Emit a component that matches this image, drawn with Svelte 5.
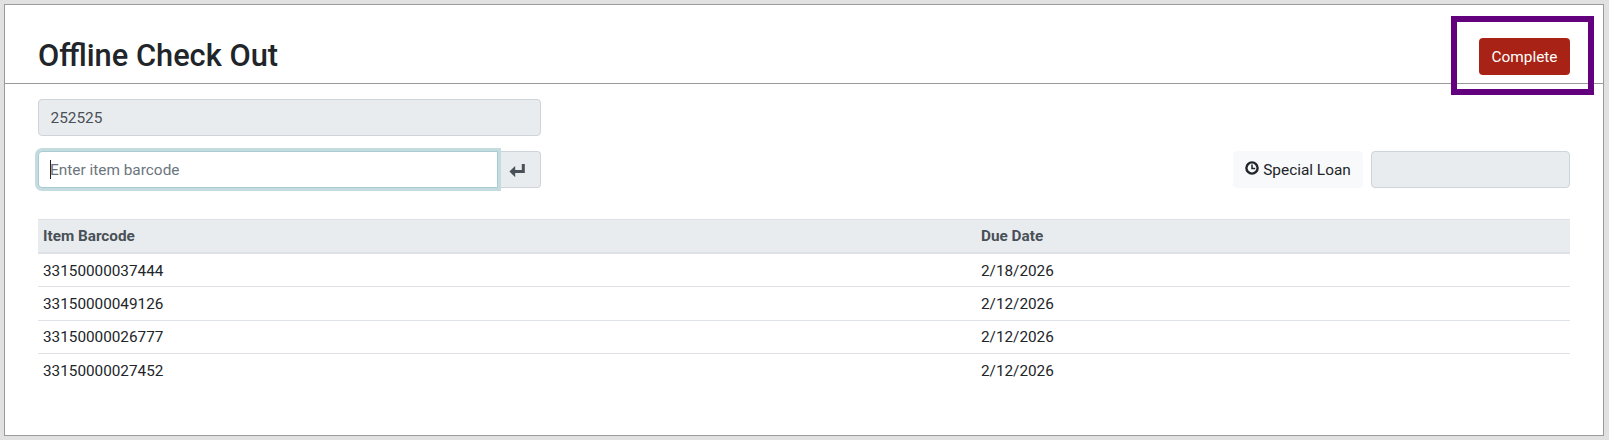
<script>
  const rows = [
    ['33150000037444', '2/18/2026'],
    ['33150000049126', '2/12/2026'],
    ['33150000026777', '2/12/2026'],
    ['33150000027452', '2/12/2026']
  ];
</script>

<div class="page">
  <main class="card">
    <header class="head">
      <h1>Offline Check Out</h1>
      <button class="complete">Complete</button>
      <div class="highlight"></div>
    </header>

    <section class="body">
      <div class="field patron">252525</div>

      <div class="controls">
        <div class="barcode">
          <div class="input"><span class="caret"></span><span class="placeholder">Enter item barcode</span></div>
          <button class="enter" aria-label="Enter">
            <svg viewBox="0 0 16 14" width="16" height="14"><path d="M14.3 1V8.6H4.6" fill="none" stroke="currentColor" stroke-width="3"/><path d="M0.4 8.6 6.2 3V14.2Z" fill="currentColor"/></svg>
          </button>
        </div>
        <div class="special">
          <button class="loan">
            <svg viewBox="0 0 14 14" width="14" height="14"><circle cx="7" cy="7" r="5.6" fill="none" stroke="currentColor" stroke-width="2.4"/><path d="M7 3.4V7.6H10.2" fill="none" stroke="currentColor" stroke-width="1.5"/></svg>
            <span>Special Loan</span>
          </button>
          <div class="field date"></div>
        </div>
      </div>

      <table>
        <thead>
          <tr><th>Item Barcode</th><th>Due Date</th></tr>
        </thead>
        <tbody>
          {#each rows as [code, due]}
            <tr><td>{code}</td><td>{due}</td></tr>
          {/each}
        </tbody>
      </table>
    </section>
  </main>
</div>

<style>
  :global(body) {
    margin: 0;
    background: #e1e1e1;
  }
  .page {
    box-sizing: border-box;
    width: 1609px;
    height: 440px;
    padding: 4px 5px 4px 4px;
    font-family: Roboto, "Liberation Sans", sans-serif;
    font-size: 15.4px;
    color: #212529;
  }
  .card {
    box-sizing: border-box;
    height: 432px;
    background: #fff;
    border: 1px solid #9a9a9a;
  }
  .head {
    position: relative;
    box-sizing: border-box;
    height: 79px;
    display: flex;
    justify-content: space-between;
    align-items: flex-end;
    padding: 0 33px 10px 33px;
    border-bottom: 1px solid #9a9a9a;
  }
  h1 {
    margin: 0 0 -1px;
    font-size: 30.8px;
    line-height: 36px;
    font-weight: 500;
  }
  .complete {
    box-sizing: border-box;
    width: 91px;
    height: 37px;
    margin-bottom: -2px;
    border: 0;
    border-radius: 4px;
    background: #a82315;
    color: #fff;
    font: inherit;
    padding: 0;
  }
  .highlight {
    position: absolute;
    left: 1446px;
    top: 11px;
    width: 143px;
    height: 79px;
    box-sizing: border-box;
    border: 6px solid #62007e;
  }
  .body {
    padding: 15px 33px 0 33px;
  }
  .field {
    box-sizing: border-box;
    height: 37px;
    background: #e9ecef;
    border: 1px solid #ced4da;
    border-radius: 4px;
    color: #495057;
    line-height: 36px;
    padding: 0 11.5px;
  }
  .patron {
    width: 503px;
  }
  .controls {
    margin-top: 15px;
    display: flex;
    justify-content: space-between;
  }
  .barcode {
    display: flex;
    width: 503px;
    height: 37px;
  }
  .input {
    position: relative;
    box-sizing: border-box;
    width: 460px;
    height: 37px;
    background: #fff;
    border: 1px solid #a9cbd2;
    border-radius: 4px 0 0 4px;
    box-shadow: 0 0 0 3px #c4dbe0;
    line-height: 36px;
    padding-left: 11px;
    color: #6c757d;
    z-index: 1;
  }
  .caret {
    position: absolute;
    left: 11px;
    top: 8px;
    width: 1px;
    height: 19px;
    background: #212529;
  }
  .enter {
    flex: 1;
    display: flex;
    align-items: center;
    justify-content: center;
    background: #e9ecef;
    border: 1px solid #ced4da;
    border-left: 0;
    border-radius: 0 4px 4px 0;
    color: #495057;
    padding: 0 4px 0 0;
  }
  .special {
    display: flex;
    gap: 8px;
  }
  .loan {
    box-sizing: border-box;
    width: 130px;
    height: 37px;
    display: flex;
    align-items: center;
    justify-content: center;
    gap: 4px;
    border: 0;
    border-radius: 4px;
    background: #f8f9fa;
    color: #212529;
    font: inherit;
    padding: 0;
  }
  .loan svg {
    margin-top: -3px;
  }
  .date {
    width: 199px;
  }
  table {
    width: 100%;
    margin-top: 31px;
    border-collapse: collapse;
    table-layout: fixed;
    font-size: 15.3px;
  }
  th, td {
    text-align: left;
    padding: 0 5px;
    line-height: 18px;
  }
  th:first-child, td:first-child {
    width: 938px;
    box-sizing: border-box;
  }
  th {
    height: 32px;
    background: #e9ecef;
    border-top: 1px solid #dee2e6;
    border-bottom: 2px solid #dee2e6;
    color: #495057;
    font-weight: 700;
  }
  td {
    height: 33.6px;
    box-sizing: border-box;
    padding-top: 1px;
    border-bottom: 1px solid #dee2e6;
  }
  tbody tr:last-child td {
    border-bottom: 0;
  }
</style>
